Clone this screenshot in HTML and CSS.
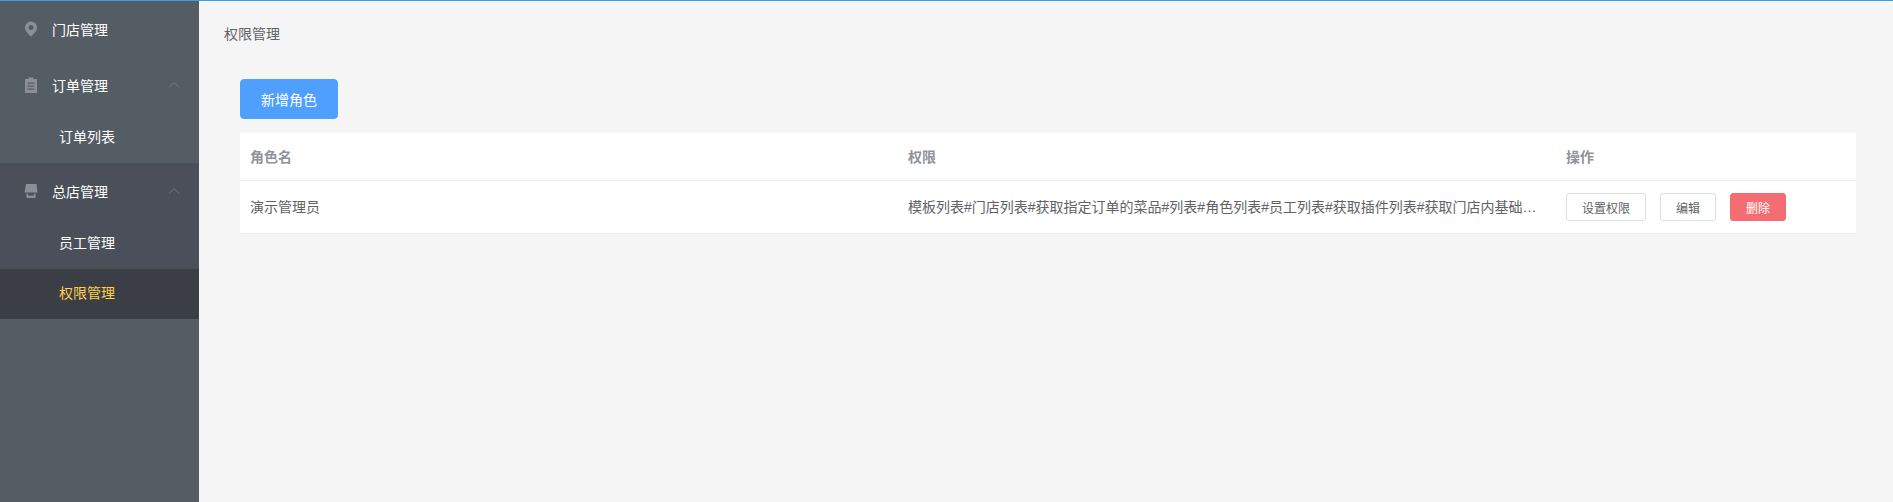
FILE: index.html
```html
<!DOCTYPE html>
<html lang="zh-CN">
<head>
<meta charset="utf-8">
<title>权限管理</title>
<link rel="stylesheet" href="styles.css">
</head>
<body>
<div class="app">
  <aside class="sidebar">
    <div class="menu-title">
      <svg class="menu-icon" viewBox="0 0 14 16"><path fill-rule="evenodd" d="M7 0.5a6 6 0 0 1 6 6c0 3.4-3.2 6.6-6 9-2.800-2.400-6-5.600-6-9a6 6 0 0 1 6-6zM7 4a2.500 2.500 0 1 0 0 5 2.500 2.500 0 0 0 0-5z"/></svg>
      <span>门店管理</span>
    </div>
    <div class="menu-title">
      <svg class="menu-icon" viewBox="0 0 14 16"><path fill-rule="evenodd" d="M4.500 0.500h5v1.500h3.500v14H1V2h3.500zM3.500 5.500v1.300h7V5.500zM3.500 8.500v1.300h7V8.500zM3.500 11.500v1.300h7v-1.300z"/></svg>
      <span>订单管理</span>
      <svg class="chevron" viewBox="0 0 12 8"><path d="M1 6.500l5-5 5 5"/></svg>
    </div>
    <div class="menu-sub">订单列表</div>
    <div class="menu-group">
      <div class="menu-title">
        <svg class="menu-icon" viewBox="0 0 14 16"><path d="M2 1h10.500l1 8.500H.5zM2.500 10.500h1.500v2h6v-2h1.500V15h-9z"/></svg>
        <span>总店管理</span>
        <svg class="chevron" viewBox="0 0 12 8"><path d="M1 6.500l5-5 5 5"/></svg>
      </div>
      <div class="menu-sub">员工管理</div>
      <div class="menu-sub active">权限管理</div>
    </div>
  </aside>
  <main class="content">
    <div class="breadcrumb">权限管理</div>
    <div class="panel">
      <button class="btn-primary">新增角色</button>
      <table class="table">
        <colgroup><col><col><col class="col-actions"></colgroup>
        <thead>
          <tr><th>角色名</th><th>权限</th><th>操作</th></tr>
        </thead>
        <tbody>
          <tr>
            <td>演示管理员</td>
            <td><div class="ellipsis">模板列表#门店列表#获取指定订单的菜品#列表#角色列表#员工列表#获取插件列表#获取门店内基础信息</div></td>
            <td class="actions"><button class="btn">设置权限</button><button class="btn">编辑</button><button class="btn btn-danger">删除</button></td>
          </tr>
        </tbody>
      </table>
    </div>
  </main>
</div>
</body>
</html>
```

FILE: styles.css
```css
* { box-sizing: border-box; }
html, body { margin: 0; height: 100%; }
body {
  font-family: "Liberation Sans", "Noto Sans CJK SC", sans-serif;
  font-size: 14px;
  color: #606266;
  background: #f5f5f5;
  overflow: hidden;
}
.app {
  display: flex;
  height: 502px;
  border-top: 1px solid #3aa0e0;
}
.sidebar {
  width: 199px;
  flex: none;
  background: #545c64;
  color: #fff;
}
.menu-title {
  display: flex;
  align-items: center;
  height: 56px;
  padding: 0 20px 0 24px;
}
.menu-icon {
  width: 14px;
  height: 16px;
  margin-right: 14px;
  fill: #8b8f96;
  flex: none;
}
.chevron {
  width: 12px;
  height: 8px;
  margin-left: auto;
  margin-right: -1px;
  fill: none;
  stroke: #767c84;
  stroke-width: 1;
}
.menu-sub {
  height: 50px;
  line-height: 49px;
  padding-left: 59px;
}
.menu-group { background: #4a4f5a; }
.menu-sub.active {
  background: #3b3e45;
  color: #ffd04b;
}
.content {
  flex: 1;
  min-width: 0;
  padding: 0 37px 0 25px;
}
.breadcrumb {
  height: 20px;
  line-height: 21px;
  margin-top: 23px;
}
.panel { padding: 35px 0 0 16px; }
.btn-primary {
  display: block;
  width: 98px;
  height: 40px;
  padding: 0;
  border: 1px solid #4f9fff;
  border-radius: 4px;
  background: #4f9fff;
  color: #fff;
  font: inherit;
}
.table {
  width: 100%;
  margin-top: 14px;
  table-layout: fixed;
  border-collapse: separate;
  border-spacing: 0;
  background: #fff;
}
.col-actions { width: 300px; }
.table th, .table td {
  padding: 0 10px;
  text-align: left;
  border-bottom: 1px solid #ebeef5;
}
.table th {
  height: 48px;
  padding-bottom: 2px;
  color: #909399;
  font-weight: 700;
}
.table td {
  height: 53px;
  padding-bottom: 2px;
}
.table td.actions { padding-bottom: 0; }
.ellipsis {
  overflow: hidden;
  white-space: nowrap;
  text-overflow: ellipsis;
}
.actions {
  font-size: 0;
  white-space: nowrap;
}
.btn {
  height: 28px;
  padding: 0 15px;
  margin-right: 14px;
  border: 1px solid #dcdfe6;
  border-radius: 3px;
  background: #fff;
  color: #606266;
  font: 12px "Liberation Sans", "Noto Sans CJK SC", sans-serif;
}
.btn-danger {
  background: #f46d73;
  border-color: #f46d73;
  color: #fff;
}
```
